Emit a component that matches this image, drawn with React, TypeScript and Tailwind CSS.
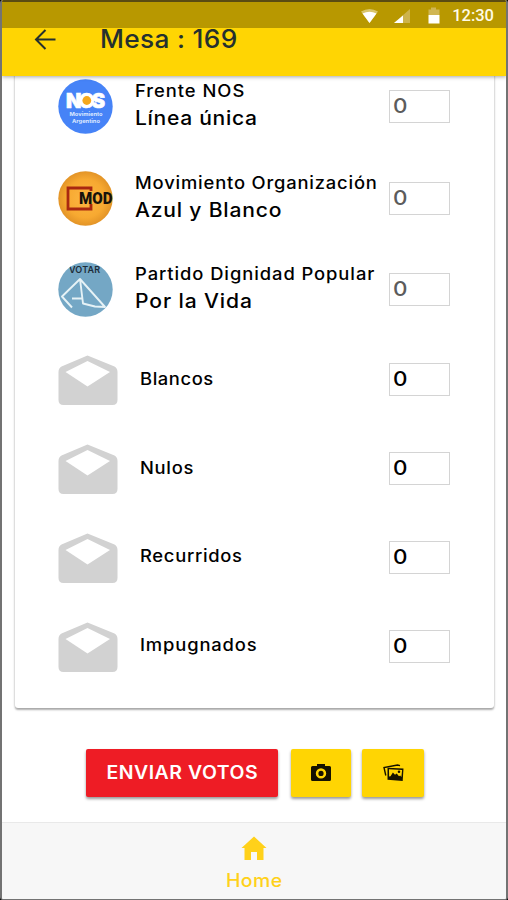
import type { ReactNode } from 'react';

type Party = {
  name: string;
  nameClass: string;
  list: string;
  listClass: string;
  logo: ReactNode;
};

function NosLogo() {
  return (
    <svg viewBox="0 0 55 55" className="size-[55px]">
      <circle cx="27.5" cy="27.5" r="27.2" fill="#4683f7" />
      <text x="8" y="28.5" fontFamily="Inter, sans-serif" fontWeight="900" fontSize="20" textLength="39" fill="#fff" stroke="#fff" strokeWidth="0.6">NOS</text>
      <circle cx="28.8" cy="21.5" r="6.8" fill="#fff" />
      <circle cx="28.8" cy="21.5" r="4.4" fill="#f5a81c" />
      <text x="11.5" y="37" fontFamily="Inter, sans-serif" fontWeight="700" fontSize="5" textLength="33" lengthAdjust="spacingAndGlyphs" fill="#dce8ff">Movimiento</text>
      <text x="14" y="43.5" fontFamily="Inter, sans-serif" fontWeight="700" fontSize="5" textLength="28" lengthAdjust="spacingAndGlyphs" fill="#dce8ff">Argentino</text>
    </svg>
  );
}

function ModLogo() {
  return (
    <svg viewBox="0 0 55 55" className="size-[55px]">
      <defs>
        <radialGradient id="mod-bg">
          <stop offset="0" stopColor="#fdb642" />
          <stop offset="0.7" stopColor="#f7a931" />
          <stop offset="1" stopColor="#e39427" />
        </radialGradient>
      </defs>
      <circle cx="27.5" cy="27.5" r="27.2" fill="url(#mod-bg)" />
      <path d="M33 20V17H10v21h23v-5" fill="none" stroke="#a92810" strokeWidth="2.8" />
      <text x="21" y="33" fontFamily="Roboto, sans-serif" fontWeight="900" fontSize="16" textLength="33.5" lengthAdjust="spacingAndGlyphs" fill="#17120c">MOD</text>
    </svg>
  );
}

function VotarLogo() {
  return (
    <svg viewBox="0 0 55 55" className="size-[55px]">
      <defs>
        <clipPath id="votar-clip">
          <circle cx="27.5" cy="27.5" r="27.2" />
        </clipPath>
      </defs>
      <g clipPath="url(#votar-clip)">
        <rect width="55" height="55" fill="#74a7c5" />
        <text x="11" y="11" fontFamily="Inter, sans-serif" fontWeight="600" fontSize="9" textLength="31" fill="#1d2c38">VOTAR</text>
        <path d="M14 45.500 4 34.500 22 17 47 45 37 44.500 25 41.500 22 17M14 36.500h10" fill="none" stroke="#e6f2f6" strokeWidth="1.900" strokeLinejoin="round" />
      </g>
    </svg>
  );
}

function EnvelopeIcon() {
  return (
    <svg viewBox="0 0 60 50" className="h-[50px] w-[60px]">
      <path
        fillRule="evenodd"
        fill="#d2d2d2"
        d="M29.500.500 56.500 11.500Q59.500 13 59.500 17V45Q59.500 50 54.500 50H5.500Q.500 50 .500 45V17Q.500 13 3.500 11.500ZM29.500 6 7.500 17 29.500 31.500 52 17Z"
      />
    </svg>
  );
}

const parties: Party[] = [
  { name: 'Frente NOS', nameClass: 'tracking-[0.9px]', list: 'Línea única', listClass: 'tracking-[0.65px]', logo: <NosLogo /> },
  { name: 'Movimiento Organización', nameClass: 'tracking-[0.76px]', list: 'Azul y Blanco', listClass: 'tracking-[0.75px]', logo: <ModLogo /> },
  { name: 'Partido Dignidad Popular', nameClass: 'tracking-[0.86px]', list: 'Por la Vida', listClass: 'tracking-[0.83px]', logo: <VotarLogo /> },
];

const otherVotes = [
  { label: 'Blancos', labelClass: 'tracking-[0.54px]' },
  { label: 'Nulos', labelClass: 'tracking-[0.65px]' },
  { label: 'Recurridos', labelClass: 'tracking-[0.65px]' },
  { label: 'Impugnados', labelClass: 'tracking-[0.8px]' },
];

function VoteBox({ muted }: { muted?: boolean }) {
  return (
    <div className="mr-11 flex h-[33px] w-[61px] shrink-0 items-center border border-[#d4d4d4] pb-px pl-[3px]">
      <span
        className={`origin-left scale-x-[1.12] text-[20px] font-medium ${muted ? 'text-[#5c5c5c]' : 'text-black'}`}
      >
        0
      </span>
    </div>
  );
}

function StatusBar() {
  return (
    <div className="flex h-[28px] items-center justify-end border-t-2 border-[#5a4b12] bg-[#b89800] pr-[12px] pt-[3px]">
      <svg viewBox="0 0 80 20" className="mr-[11px] h-5 w-20">
        <path d="M0 4.500Q8.500-.500 17 4.500L8.500 16Z" fill="#d9c56b" />
        <path d="M1.500 6.500Q8.500 3 15.500 6.500L8.500 16Z" fill="#fff" />
        <path d="M49 2v14H33Z" fill="#cdb34c" />
        <path d="M42 8.500V16H33Z" fill="#fff" />
        <path d="M70 .500h5v2h3.500V8H67.500V2.500H70Z" fill="#d0b653" />
        <path d="M67.500 8h11v8.500h-11Z" fill="#fff" />
      </svg>
      <span className="font-[Roboto,sans-serif] text-[16.500px] font-medium leading-none text-[#fffbe6]">12:30</span>
    </div>
  );
}

export default function App() {
  return (
    <div className="h-[900px] w-[508px] overflow-hidden bg-black font-[Inter,sans-serif] text-black">
      <div className="flex h-full flex-col overflow-hidden rounded-[3px] border-x-2 border-b border-[#737373] bg-white">
        <header className="relative z-10 h-[76px] shrink-0 bg-[#ffd503] shadow-[0_1px_4px_rgba(0,0,0,0.35)]">
          <StatusBar />
          <div className="flex h-[22px] items-center text-[#25302f]">
            <svg viewBox="0 0 22 22" className="ml-8 size-[22px] shrink-0" fill="none" stroke="currentColor" strokeWidth="2">
              <path d="M21.500 11.500H2M11.500 2 2 11.500l9.500 9.500" />
            </svg>
            <h1 className="ml-[43.500px] origin-left scale-x-[1.05] text-[25px] font-medium leading-none tracking-[0.3px]">Mesa : 169</h1>
          </div>
        </header>

        <main className="-mt-[15px] flex grow flex-col items-center">
          <section className="h-[647px] w-[479px] shrink-0 rounded-[3px] bg-white shadow-[0_2px_2px_rgba(0,0,0,0.3),0_0_3px_rgba(0,0,0,0.16)]">
            {parties.map((party) => (
              <div key={party.name} className="flex h-[91.500px] items-center">
                <div className="ml-[43px] shrink-0">{party.logo}</div>
                <div className="ml-[22px] grow whitespace-nowrap pb-[3px]">
                  <p className={`origin-left scale-x-[1.08] text-[17px] font-medium leading-[27px] ${party.nameClass}`}>{party.name}</p>
                  <p className={`origin-left scale-x-[1.08] text-[19.500px] font-medium leading-[27px] ${party.listClass}`}>{party.list}</p>
                </div>
                <VoteBox muted />
              </div>
            ))}
            {otherVotes.map((vote) => (
              <div key={vote.label} className="flex h-[88.900px] items-center">
                <div className="ml-[43px] shrink-0">
                  <EnvelopeIcon />
                </div>
                <p className={`ml-[22px] grow origin-left scale-x-[1.08] pb-px text-[17px] font-medium ${vote.labelClass}`}>{vote.label}</p>
                <VoteBox />
              </div>
            ))}
          </section>

          <div className="mt-[41px] flex h-[48px] w-full pl-[84px] text-black">
            <button className="h-full w-[192px] rounded-[2px] bg-[#ee1c25] pb-[2px] text-[18px] font-semibold text-white shadow-[0_2px_3px_rgba(0,0,0,0.4)]">
              <span className="inline-block scale-x-[1.08] tracking-[0.500px]">ENVIAR VOTOS</span>
            </button>
            <button className="ml-[13px] flex h-full w-[60px] items-center justify-center rounded-[2px] bg-[#ffd503] shadow-[0_2px_3px_rgba(0,0,0,0.4)]">
              <svg viewBox="0 0 20 18" className="h-[18px] w-5">
                <path fillRule="evenodd" d="M6 2V0h8v2h4.500Q20 2 20 3.500v12q0 1.500-1.500 1.500h-17Q0 17 0 15.500v-12Q0 2 1.500 2ZM10 4.200a5.200 5.200 0 1 0 0 10.400 5.200 5.200 0 0 0 0-10.400ZM10 6.800a2.600 2.600 0 1 1 0 5.200 2.600 2.600 0 0 1 0-5.200Z" fill="#151200" />
              </svg>
            </button>
            <button className="ml-[11px] flex h-full w-[62px] items-center justify-center rounded-[2px] bg-[#ffd503] shadow-[0_2px_3px_rgba(0,0,0,0.4)]">
              <svg viewBox="0 0 21 18" className="h-[18px] w-[21px]">
                <path d="M2.800 11.500 1 3.500 14.500 1l2.500.700" fill="none" stroke="#151200" strokeWidth="1.400" />
                <path fillRule="evenodd" d="m4.500 3.700 16 .800-.800 12.500-15.200-1.200ZM6 5.300l.100 7.200 1.400-.200 2.400-3.800 2.100 2.200 1.700-1.200 2.300 2.800 1.200-.700 1.200 1.300.700-6.900ZM16 6.500a1.300 1.300 0 1 1 0 2.600 1.300 1.300 0 0 1 0-2.600Z" fill="#151200" />
              </svg>
            </button>
          </div>
        </main>

        <nav className="flex h-[77px] shrink-0 flex-col items-center border-t border-[#e9e9e9] bg-[#f7f7f7] pt-[13px] text-[#ffd11a]">
          <svg viewBox="0 0 26 24" className="h-6 w-[26px]">
            <path d="M13 .500 25.500 12h-3v12H16v-8h-6v8H3.500V12h-3Z" fill="currentColor" />
          </svg>
          <span className="mt-[9px] scale-x-[1.08] text-[18px] font-medium leading-6 tracking-[0.400px]">Home</span>
        </nav>
      </div>
    </div>
  );
}
